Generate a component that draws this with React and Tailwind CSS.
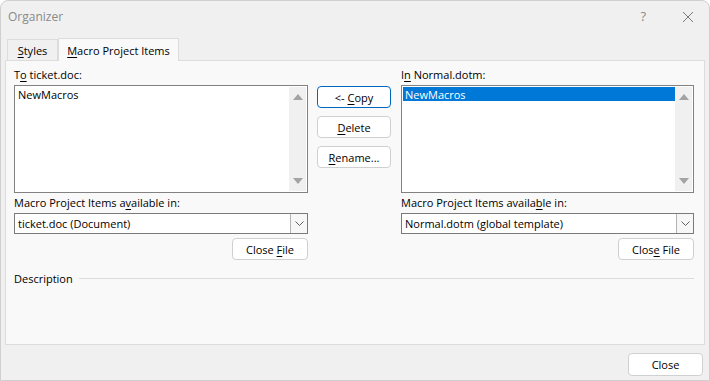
const FONT = { fontFamily: '"Segoe UI", "Open Sans", "Noto Sans", sans-serif' };

function U({ children }) {
  return <span className="underline underline-offset-2">{children}</span>;
}

function Button({ children, primary, className = "" }) {
  return (
    <button
      className={`h-[22px] rounded-[4px] bg-white text-[11px] leading-none text-black flex items-center justify-center ${
        primary ? "border border-[#0067c0]" : "border border-[#d0d0d0]"
      } ${className}`}
    >
      {children}
    </button>
  );
}

function ScrollBar() {
  return (
    <div className="w-[17px] bg-[#f0f0f0] flex flex-col items-center justify-between py-[7px]">
      <div className="w-0 h-0 border-l-[5px] border-r-[5px] border-b-[6px] border-l-transparent border-r-transparent border-b-[#a3a3a3]" />
      <div className="w-0 h-0 border-l-[5px] border-r-[5px] border-t-[6px] border-l-transparent border-r-transparent border-t-[#a3a3a3]" />
    </div>
  );
}

function ListBox({ selected }) {
  return (
    <div className="h-[108px] border border-[#828282] bg-white flex p-px">
      <div className="flex-1">
        <div
          className={`h-[14px] flex items-center pl-[2px] leading-none ${
            selected ? "bg-[#0078d7] text-white" : "text-black"
          }`}
        >
          NewMacros
        </div>
      </div>
      <ScrollBar />
    </div>
  );
}

function Combo({ value }) {
  return (
    <div className="h-[21px] border border-[#7a7a7a] bg-white flex">
      <div className="flex-1 flex items-center pl-[3px] leading-none">{value}</div>
      <div className="w-[17px] border-l border-[#b4b4b4] bg-[#f7f7f7] flex items-center justify-center">
        <svg width="9" height="5" viewBox="0 0 9 5" fill="none" stroke="#606060" strokeWidth="1">
          <path d="M0.5 0.5L4.5 4.5L8.5 0.5" />
        </svg>
      </div>
    </div>
  );
}

export default function App() {
  return (
    <div
      style={FONT}
      className="w-[710px] h-[381px] bg-[#f0f0f0] text-[11px] text-black rounded-t-[8px] border border-[#cfcfcf] overflow-hidden flex flex-col"
    >
      <div className="h-[31px] flex items-center pl-[7px] pr-[15px] text-[#8a8a8a]">
        <span className="flex-1 text-[12px]">Organizer</span>
        <span className="text-[13px] mr-[36px]">?</span>
        <svg width="12" height="12" viewBox="0 0 12 12" stroke="#7a7a7a" strokeWidth="1">
          <path d="M1 1L11 11M11 1L1 11" />
        </svg>
      </div>

      <div className="flex items-end pl-[6px] h-[28px]">
        <div className="h-[21px] w-[51px] border border-b-0 border-[#dcdcdc] bg-[#f0f0f0] flex items-center justify-center leading-none">
          <span>
            <U>S</U>tyles
          </span>
        </div>
        <div className="h-[23px] w-[121px] border border-b-0 border-[#dcdcdc] bg-[#f9f9f9] flex items-center justify-center leading-none -mb-px relative z-10">
          <span>
            <U>M</U>acro Project Items
          </span>
        </div>
      </div>

      <div className="mx-[4px] h-[285px] border border-[#dcdcdc] bg-[#f9f9f9] px-[8px] pt-[8px] flex flex-col">
        <div className="flex">
          <div className="w-[294px] flex flex-col">
            <div className="h-[16px] leading-none">
              T<U>o</U> ticket.doc:
            </div>
            <ListBox />
          </div>

          <div className="w-[74px] ml-[9px] mt-[17px] flex flex-col gap-[8px]">
            <Button primary>
              &lt;- <span className="ml-[3px]"><U>C</U>opy</span>
            </Button>
            <Button>
              <span>
                <U>D</U>elete
              </span>
            </Button>
            <Button>
              <span>
                <U>R</U>ename...
              </span>
            </Button>
          </div>

          <div className="w-[293px] ml-[10px] flex flex-col">
            <div className="h-[16px] leading-none">
              I<U>n</U> Normal.dotm:
            </div>
            <ListBox selected />
          </div>
        </div>

        <div className="flex mt-[4px]">
          <div className="w-[294px] flex flex-col">
            <div className="h-[15px] leading-none mb-[1px]">
              Macro Project Items a<U>v</U>ailable in:
            </div>
            <Combo value="ticket.doc (Document)" />
            <div className="flex justify-end mt-[4px]">
              <Button className="w-[76px]">
                <span>
                  Close <U>F</U>ile
                </span>
              </Button>
            </div>
          </div>
          <div className="w-[293px] ml-[93px] flex flex-col">
            <div className="h-[15px] leading-none mb-[1px]">
              Macro Project Items availa<U>b</U>le in:
            </div>
            <Combo value="Normal.dotm (global template)" />
            <div className="flex justify-end mt-[4px]">
              <Button className="w-[76px]">
                <span>
                  Clos<U>e</U> File
                </span>
              </Button>
            </div>
          </div>
        </div>

        <div className="flex items-center mt-[13px] w-[680px]">
          <span className="leading-none">Description</span>
          <div className="flex-1 h-px bg-[#dcdcdc] ml-[6px]" />
        </div>
      </div>

      <div className="flex justify-end pr-[6px] mt-[8px]">
        <Button className="w-[75px] h-[23px]">Close</Button>
      </div>
    </div>
  );
}
